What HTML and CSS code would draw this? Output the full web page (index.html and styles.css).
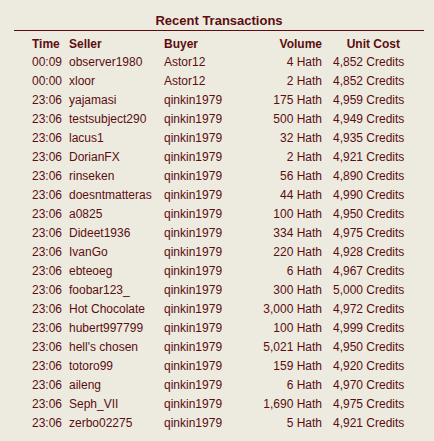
FILE: index.html
```html
<!DOCTYPE html>
<html>
<head>
<meta charset="utf-8">
<link rel="stylesheet" href="styles.css">
</head>
<body>
<div class="panel">
  <div class="title">Recent Transactions</div>
  <table class="tx">
    <colgroup>
      <col class="c-time"><col class="c-seller"><col class="c-buyer"><col class="c-vol"><col class="c-cost">
    </colgroup>
    <thead>
      <tr><th>Time</th><th>Seller</th><th>Buyer</th><th class="r">Volume</th><th class="r hcost">Unit Cost</th></tr>
    </thead>
    <tbody>
      <tr><td>00:09</td><td>observer1980</td><td>Astor12</td><td class="r">4 Hath</td><td class="cost">4,852 Credits</td></tr>
      <tr><td>00:00</td><td>xloor</td><td>Astor12</td><td class="r">2 Hath</td><td class="cost">4,852 Credits</td></tr>
      <tr><td>23:06</td><td>yajamasi</td><td>qinkin1979</td><td class="r">175 Hath</td><td class="cost">4,959 Credits</td></tr>
      <tr><td>23:06</td><td>testsubject290</td><td>qinkin1979</td><td class="r">500 Hath</td><td class="cost">4,949 Credits</td></tr>
      <tr><td>23:06</td><td>lacus1</td><td>qinkin1979</td><td class="r">32 Hath</td><td class="cost">4,935 Credits</td></tr>
      <tr><td>23:06</td><td>DorianFX</td><td>qinkin1979</td><td class="r">2 Hath</td><td class="cost">4,921 Credits</td></tr>
      <tr><td>23:06</td><td>rinseken</td><td>qinkin1979</td><td class="r">56 Hath</td><td class="cost">4,890 Credits</td></tr>
      <tr><td>23:06</td><td>doesntmatteras</td><td>qinkin1979</td><td class="r">44 Hath</td><td class="cost">4,990 Credits</td></tr>
      <tr><td>23:06</td><td>a0825</td><td>qinkin1979</td><td class="r">100 Hath</td><td class="cost">4,950 Credits</td></tr>
      <tr><td>23:06</td><td>Dideet1936</td><td>qinkin1979</td><td class="r">334 Hath</td><td class="cost">4,975 Credits</td></tr>
      <tr><td>23:06</td><td>IvanGo</td><td>qinkin1979</td><td class="r">220 Hath</td><td class="cost">4,928 Credits</td></tr>
      <tr><td>23:06</td><td>ebteoeg</td><td>qinkin1979</td><td class="r">6 Hath</td><td class="cost">4,967 Credits</td></tr>
      <tr><td>23:06</td><td>foobar123_</td><td>qinkin1979</td><td class="r">300 Hath</td><td class="cost">5,000 Credits</td></tr>
      <tr><td>23:06</td><td>Hot Chocolate</td><td>qinkin1979</td><td class="r">3,000 Hath</td><td class="cost">4,972 Credits</td></tr>
      <tr><td>23:06</td><td>hubert997799</td><td>qinkin1979</td><td class="r">100 Hath</td><td class="cost">4,999 Credits</td></tr>
      <tr><td>23:06</td><td>hell's chosen</td><td>qinkin1979</td><td class="r">5,021 Hath</td><td class="cost">4,950 Credits</td></tr>
      <tr><td>23:06</td><td>totoro99</td><td>qinkin1979</td><td class="r">159 Hath</td><td class="cost">4,920 Credits</td></tr>
      <tr><td>23:06</td><td>aileng</td><td>qinkin1979</td><td class="r">6 Hath</td><td class="cost">4,970 Credits</td></tr>
      <tr><td>23:06</td><td>Seph_VII</td><td>qinkin1979</td><td class="r">1,690 Hath</td><td class="cost">4,975 Credits</td></tr>
      <tr><td>23:06</td><td>zerbo02275</td><td>qinkin1979</td><td class="r">5 Hath</td><td class="cost">4,921 Credits</td></tr>
    </tbody>
  </table>
</div>
</body>
</html>
```

FILE: styles.css
```css
html, body {
  margin: 0;
  padding: 0;
  background: #EDEBDF;
}
body {
  font-family: "Liberation Sans", Arial, sans-serif;
  color: #5C0D11;
  font-size: 12px;
}
.panel {
  margin-left: 14px;
  width: 410px;
}
.title {
  margin-top: 12px;
  line-height: 18px;
  font-size: 13px;
  font-weight: bold;
  text-align: center;
  border-bottom: 1px solid #5C0D11;
}
.tx {
  margin-top: 4px;
  margin-left: 18px;
  border-collapse: collapse;
  table-layout: fixed;
  width: 368px;
}
.c-time { width: 37px; }
.c-seller { width: 95px; }
.c-buyer { width: 98px; }
.c-vol { width: 60px; }
.c-cost { width: 78px; }
.tx th, .tx td {
  padding: 0;
  text-align: left;
  white-space: nowrap;
  overflow: visible;
}
.tx th {
  font-weight: bold;
  height: 18px;
  line-height: 18px;
}
.tx td {
  height: 19px;
  line-height: 19px;
}
.tx .r { text-align: right; }
.tx .cost { padding-left: 11px; }
```
